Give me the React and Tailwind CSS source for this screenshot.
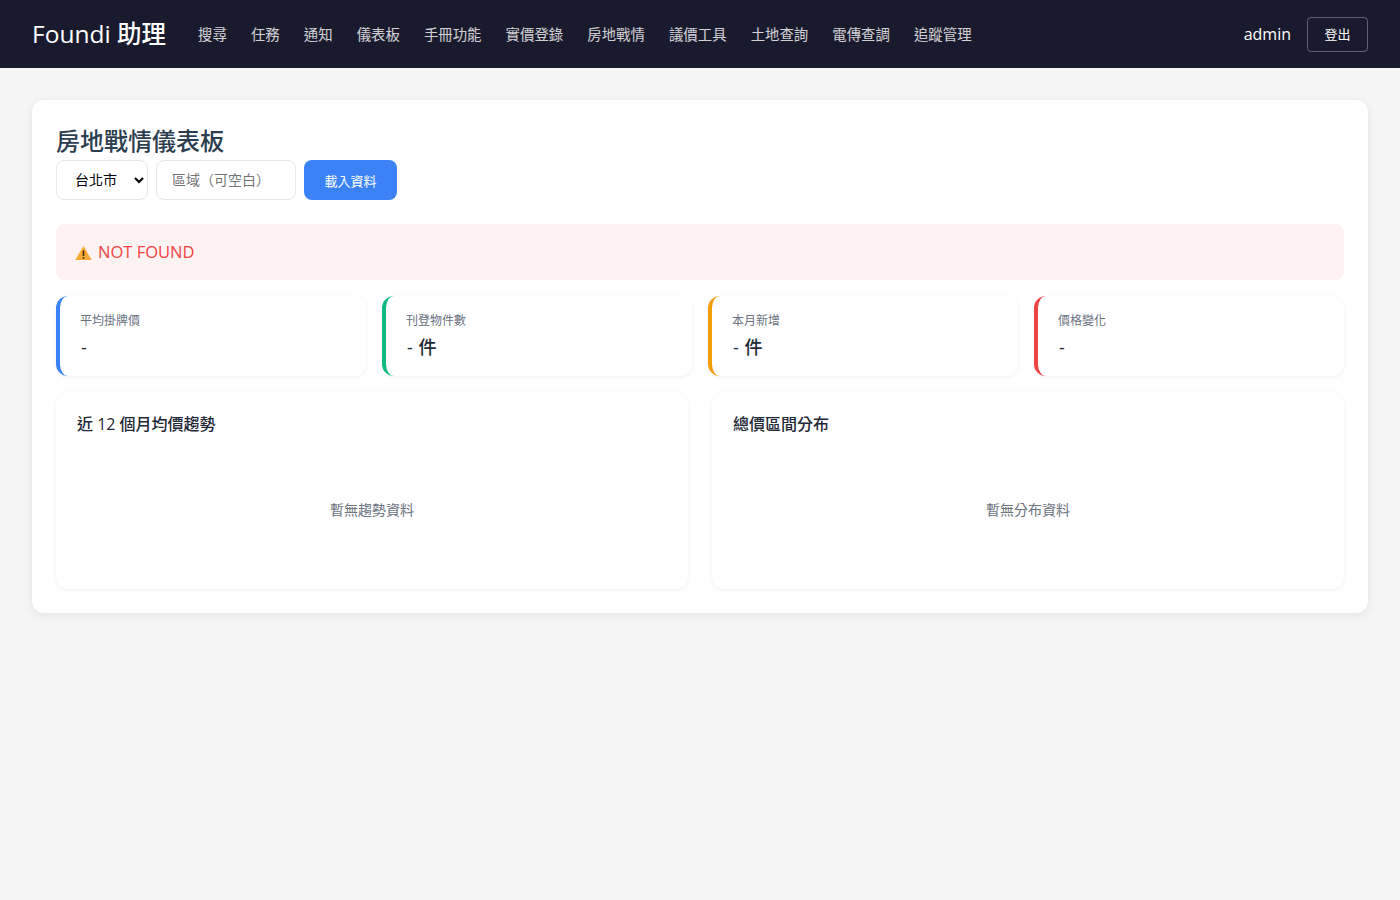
import React from 'react'

const FONT = "font-['Open_Sans','Noto_Sans_CJK_TC',sans-serif]"

const NAV_ITEMS = ['搜尋', '任務', '通知', '儀表板', '手冊功能', '實價登錄', '房地戰情', '議價工具', '土地查詢', '電傳查調', '追蹤管理']

const STATS = [
  { label: '平均掛牌價', value: '-', border: 'border-[#3b82f6]' },
  { label: '刊登物件數', value: '- 件', border: 'border-[#10b981]' },
  { label: '本月新增', value: '- 件', border: 'border-[#f59e0b]' },
  { label: '價格變化', value: '-', border: 'border-[#ef4444]' },
]

const CHARTS = [
  { title: '近 12 個月均價趨勢', empty: '暫無趨勢資料' },
  { title: '總價區間分布', empty: '暫無分布資料' },
]

function WarningIcon() {
  return (
    <svg width="17" height="16" viewBox="0 0 17 16" className="mr-[6px] mt-[2px] shrink-0">
      <path d="M8.5 1 L16.8 15 H0.2 Z" fill="#fbab35" />
      <rect x="7.7" y="5.5" width="1.6" height="5.5" fill="#3d2b0a" />
      <rect x="7.7" y="12" width="1.6" height="1.7" fill="#3d2b0a" />
    </svg>
  )
}

export default function App() {
  return (
    <div className={`min-h-[900px] bg-[#f5f5f5] ${FONT}`}>
      {/* Header */}
      <header className="flex h-[68px] items-center justify-between bg-[#1a1a2e] px-8">
        <div className="flex items-center gap-[32px]">
          <span className="text-[24.5px] font-medium leading-none text-white">Foundi 助理</span>
          <nav className="flex gap-[24.1px] pt-px">
            {NAV_ITEMS.map(item => (
              <a key={item} className="text-[14.4px] leading-5 text-white/80">{item}</a>
            ))}
          </nav>
        </div>
        <div className="flex items-center gap-4">
          <span className="text-[16px] text-white">admin</span>
          <button className="h-[35px] w-[61px] rounded border border-white/30 pt-[2px] text-[13px] text-white">登出</button>
        </div>
      </header>

      <main className="p-8">
        <div className="rounded-xl bg-white p-6 shadow-[0_2px_8px_rgba(0,0,0,0.08)]">
          <h2 className="-mt-px mb-px text-[24px] font-medium leading-9 text-[#2c3e50]">房地戰情儀表板</h2>

          {/* Filters */}
          <div className="mb-6 flex gap-2">
            <select className="h-10 w-[92px] rounded-lg border border-[#e5e7eb] bg-white pl-[14px] pr-1 pb-px text-[14px] text-black">
              <option>台北市</option>
            </select>
            <input
              placeholder="區域（可空白）"
              className="h-10 w-[140px] rounded-lg border border-[#e5e7eb] px-[15px] pb-px text-[14px] placeholder:text-[#757575]"
            />
            <button className="h-10 w-[93px] rounded-lg bg-[#3b82f6] pt-[3px] text-[13px] text-white">載入資料</button>
          </div>

          {/* Alert */}
          <div className="mb-4 flex h-14 items-center rounded-lg bg-[#fef2f2] pl-[19px] text-[16.5px] text-[#ef4444]">
            <WarningIcon />
            <span>NOT FOUND</span>
          </div>

          {/* Stats */}
          <div className="mb-4 grid grid-cols-4 gap-4">
            {STATS.map(s => (
              <div key={s.label} className={`h-20 rounded-xl border-l-4 bg-white px-5 pb-4 pt-[17px] shadow-[0_1px_4px_rgba(0,0,0,0.06)] ${s.border}`}>
                <div className="text-[12px] leading-4 text-[#6b7280]">{s.label}</div>
                <div className="mt-[6px] pl-px text-[18px] font-medium leading-6 text-[#1f2937] [word-spacing:1px]">{s.value}</div>
              </div>
            ))}
          </div>

          {/* Charts */}
          <div className="grid grid-cols-2 gap-6">
            {CHARTS.map(c => (
              <div key={c.title} className="h-[197px] rounded-xl bg-white p-5 pl-[21px] shadow-[0_1px_4px_rgba(0,0,0,0.06)]">
                <h3 className="text-[16px] font-medium leading-6 text-[#1f2937]">{c.title}</h3>
                <div className="mt-[62px] pr-px text-center text-[14px] leading-6 text-[#6b7280]">{c.empty}</div>
              </div>
            ))}
          </div>
        </div>
      </main>
    </div>
  )
}
